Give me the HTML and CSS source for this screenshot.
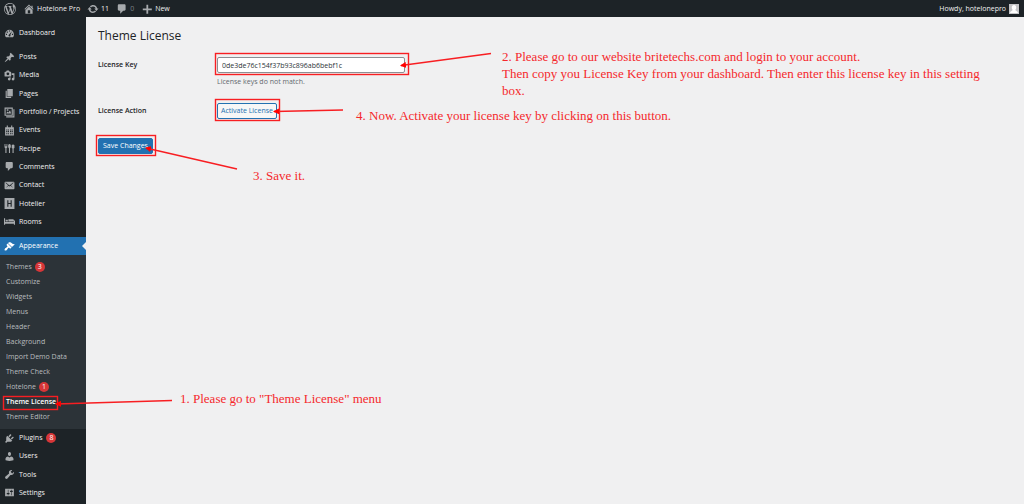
FILE: index.html
```
<!DOCTYPE html>
<html lang="en">
<head>
  <meta charset="UTF-8">
  <title>Theme License</title>
  <link rel="stylesheet" href="styles.css">
</head>
<body>
  <header class="adminbar">
    <a href="#" class="wp-logo" aria-label="WordPress"><svg viewBox="0 0 20 20"><path d="M20 10c0-5.51-4.49-10-10-10C4.48 0 0 4.49 0 10c0 5.52 4.48 10 10 10 5.51 0 10-4.48 10-10zM7.78 15.37L4.37 6.22c.55-.02 1.17-.08 1.17-.08.5-.06.44-1.13-.06-1.11 0 0-1.45.11-2.37.11-.18 0-.37 0-.58-.01C4.12 2.69 6.87 1.11 10 1.11c2.33 0 4.45.87 6.05 2.34-.68-.11-1.65.39-1.65 1.58 0 .74.45 1.36.9 2.1.35.61.55 1.36.55 2.46 0 1.49-1.4 5-1.4 5l-3.03-8.37c.54-.02.82-.17.82-.17.5-.05.44-1.25-.06-1.22 0 0-1.44.12-2.38.12-.87 0-2.33-.12-2.33-.12-.5-.03-.56 1.2-.06 1.22l.92.08 1.26 3.41zM17.41 10c.24-.64.74-1.87.43-4.25.7 1.29 1.05 2.71 1.05 4.25 0 3.29-1.73 6.24-4.4 7.78.97-2.59 1.94-5.2 2.92-7.78zM6.1 18.09C3.12 16.65 1.11 13.53 1.11 10c0-1.3.23-2.48.72-3.59C3.25 10.3 4.67 14.2 6.1 18.09zm4.03-6.63l2.58 6.98c-.86.29-1.76.45-2.71.45-.79 0-1.57-.11-2.29-.33.81-2.38 1.62-4.74 2.42-7.1z"/></svg></a>
    <a href="#"><svg viewBox="0 0 20 20"><path d="M16 8.500l1.530 1.530-1.060 1.060L10 4.600l-6.470 6.490-1.060-1.060L10 2.500l4 4v-2h2v4zm-6-2.460l6 5.990V18H4v-5.970zM12 17v-5H8v5h4z"/></svg>Hotelone Pro</a>
    <a href="#"><svg viewBox="0 0 20 20"><path d="M10.200 3.280c3.530 0 6.430 2.610 6.920 6h2.080l-3.500 4-3.500-4h2.320c-.450-1.970-2.210-3.450-4.320-3.450-1.450 0-2.730.710-3.540 1.780L4.950 5.660C6.230 4.200 8.110 3.280 10.200 3.280zm-.400 13.440c-3.520 0-6.430-2.610-6.920-6H.8l3.500-4 3.500 4H5.480c.450 1.970 2.210 3.450 4.320 3.450 1.450 0 2.730-.710 3.540-1.780l1.710 1.950c-1.280 1.460-3.150 2.380-5.250 2.380z"/></svg>11</a>
    <a href="#"><svg viewBox="0 0 20 20"><path d="M5 2h9c1.100 0 2 .9 2 2v7c0 1.100-.9 2-2 2h-2l-5 5v-5H5c-1.100 0-2-.9-2-2V4c0-1.100.9-2 2-2z"/></svg><span class="none">0</span></a>
    <a href="#"><svg viewBox="0 0 20 20"><path d="M18 9v3h-6v6H9v-6H3V9h6V3h3v6z"/></svg>New</a>
    <a href="#" class="account">Howdy, hotelonepro<span class="avatar"><svg viewBox="0 0 20 20"><path d="M10 2c3 0 4.500 2 4.500 5 0 2-1 4-2 5 1 2 5 2 5.500 6H2c.5-4 4.500-4 5.500-6-1-1-2-3-2-5 0-3 1.500-5 4.500-5z"/></svg></span></a>
  </header>

  <div class="wrap">
    <nav class="sidebar">
      <a href="#" class="item first"><svg viewBox="0 0 20 20"><path fill-rule="evenodd" d="M3.760 17h12.480c1.340-1.630 2.010-3.820 1.740-6.270C17.500 6.300 14.100 3 10 3s-7.500 3.300-7.980 7.730C1.750 13.180 2.420 15.370 3.760 17zM9 4.500h2v2H9zM5 6.500h2v2H5zM3.500 10.500h2v2h-2zM14.500 10.500h2v2h-2zM14.500 6l-3 6.500c.8 1.500-.2 3-1.500 3s-2.300-1.500-1.500-2.700z"/></svg>Dashboard</a>

      <div class="group main">
        <a href="#" class="item"><svg viewBox="0 0 20 20"><path d="M10.440 3.020l1.820-1.820 6.360 6.350-1.830 1.820c-1.050-.680-2.480-.570-3.410.360l-.750.750c-.920.930-1.040 2.350-.350 3.410l-1.830 1.820-2.410-2.410-2.800 2.790c-.420.420-3.380 2.710-3.800 2.290s1.860-3.390 2.280-3.810l2.790-2.790L4.100 9.360l1.830-1.820c1.050.690 2.480.570 3.400-.360l.750-.750c.930-.920 1.050-2.350.360-3.410z"/></svg>Posts</a>
        <a href="#" class="item"><svg viewBox="0 0 20 20"><path fill-rule="evenodd" d="M13 11V4c0-.55-.45-1-1-1h-1.670L9 1H5L3.670 3H2c-.55 0-1 .45-1 1v7c0 .55.45 1 1 1h10c.55 0 1-.45 1-1zM7 4.500a2.500 2.500 0 1 1 0 5 2.500 2.500 0 0 1 0-5zM14 6h5v10.500a2.500 2.500 0 1 1-2-2.450V9h-3zM10 14.050V13h2v3.500a2.500 2.500 0 1 1-2-2.450z"/></svg>Media</a>
        <a href="#" class="item"><svg viewBox="0 0 20 20"><path d="M6 15V2h10v13H6zm-1 1h8v2H3V5h2v11z"/></svg>Pages</a>
        <a href="#" class="item"><svg viewBox="0 0 20 20"><path fill-rule="evenodd" d="M1 1h15v15H1zM3 3v11h11V3zM4 12l2-4 2 2 3-4 2 6zM5 4h3v3H5zM17 4h2v15H4v-2h13z"/></svg>Portfolio / Projects</a>
        <a href="#" class="item"><svg viewBox="0 0 20 20"><path fill-rule="evenodd" d="M2 4h3V1h2v3h6V1h2v3h3v15H2zM4 8v2h2V8zM7 8v2h2V8zM11 8v2h2V8zM14 8v2h2V8zM4 11v2h2v-2zM7 11v2h2v-2zM11 11v2h2v-2zM14 11v2h2v-2zM4 15v2h2v-2zM7 15v2h2v-2zM11 15v2h2v-2zM14 15v2h2v-2z"/></svg>Events</a>
        <a href="#" class="item"><svg viewBox="0 0 20 20"><path d="M1 2h1v4h1V2h1v4h1V2h1v6L4.500 9.500V18h-2V9.500L1 8zM10 2c2 0 2.500 2 2.500 4 0 1.500-.5 3-1.500 3.500V18H9V9.500C8 9 7.500 7.500 7.500 6c0-2 .5-4 2.500-4zM14 4c1-2 4-2 5 0v5l-1.500 1v8h-2v-8L14 9z"/></svg>Recipe</a>
        <a href="#" class="item"><svg viewBox="0 0 20 20"><path d="M5 2h9c1.100 0 2 .9 2 2v7c0 1.100-.9 2-2 2h-2l-5 5v-5H5c-1.100 0-2-.9-2-2V4c0-1.100.9-2 2-2z"/></svg>Comments</a>
        <a href="#" class="item"><svg viewBox="0 0 20 20"><path fill-rule="evenodd" d="M3 3h14c1 0 2 .8 2 2v10c0 1-.9 2-2 2H3c-1 0-2-.9-2-2V5c0-1.200 1-2 2-2zM2.500 5l5 4.500-4.500 5 5.200-4.200L10 12l1.800-1.700L17 14.500l-4.500-5 5-4.500-1-.5L10 9.800 3.500 4.500z"/></svg>Contact</a>
        <a href="#" class="item"><svg viewBox="0 0 20 20"><path fill-rule="evenodd" d="M1 0h18v20H1zM6 4v12h2v-5h4v5h2V4h-2v5H8V4z"/></svg>Hotelier</a>
        <a href="#" class="item"><svg viewBox="0 0 20 20"><path d="M0 4h2v7h16V8h2v8h-2v-2H2v2H0zM3 7h4v3H3zM8 6h8c1 0 2 1 2 2v2H8z"/></svg>Rooms</a>
      </div>

      <a href="#" class="item current"><svg viewBox="0 0 20 20"><path d="M14.480 11.060L7.410 3.990l1.500-1.500c.5-.56 2.300-.47 3.510.32 1.210.8 1.430 1.280 2.910 2.100 1.180.64 2.450 1.260 4.450.85zm-.71.71L6.700 4.700 4.930 6.470c-.39.39-.39 1.020 0 1.410l1.060 1.060c.39.39.39 1.030 0 1.420-.6.6-1.430 1.110-2.210 1.690-.35.26-.7.53-1.010.84C1.430 14.230.4 16.080 1.400 17.070c.99 1 2.840-.03 4.180-1.360.31-.31.58-.66.85-1.020.57-.78 1.080-1.610 1.690-2.210.39-.39 1.020-.39 1.410 0l1.060 1.060c.39.39 1.020.39 1.410 0z"/></svg>Appearance</a>
      <div class="submenu">
        <a href="#">Themes<span class="count">3</span></a>
        <a href="#">Customize</a>
        <a href="#">Widgets</a>
        <a href="#">Menus</a>
        <a href="#">Header</a>
        <a href="#">Background</a>
        <a href="#">Import Demo Data</a>
        <a href="#">Theme Check</a>
        <a href="#">Hotelone<span class="count">1</span></a>
        <a href="#" class="active">Theme License</a>
        <a href="#">Theme Editor</a>
      </div>

      <div class="group bottom">
        <a href="#" class="item"><svg viewBox="0 0 20 20"><path d="M13.110 4.360L9.870 7.600 8 5.730l3.240-3.240c.35-.34 1.050-.2 1.560.32.52.51.66 1.210.31 1.550zm-8 1.770l.91-1.120 9.010 9.010-1.190.84c-.71.71-2.630 1.160-3.820 1.160H6.140L4.900 17.260c-.59.59-1.540.59-2.120 0-.59-.58-.59-1.530 0-2.120l1.240-1.240v-3.880c0-1.130.4-3.190 1.090-3.890zm7.260 3.970l3.240-3.240c.34-.35 1.040-.21 1.550.31.52.51.66 1.210.31 1.550l-3.240 3.250z"/></svg>Plugins<span class="count">8</span></a>
        <a href="#" class="item"><svg viewBox="0 0 20 20"><path d="M10 9.250c-2.270 0-2.730-3.440-2.730-3.440C7 4.020 7.820 2 9.970 2c2.160 0 2.980 2.020 2.710 3.810 0 0-.41 3.440-2.680 3.440zm0 2.570L12.720 10c2.390 0 4.520 2.330 4.520 4.530v2.490s-3.650 1.130-7.240 1.130c-3.650 0-7.240-1.130-7.240-1.130v-2.490c0-2.250 1.940-4.480 4.470-4.480z"/></svg>Users</a>
        <a href="#" class="item"><svg viewBox="0 0 20 20"><path d="M16.680 9.770c-1.340 1.340-3.300 1.670-4.950.99l-5.410 6.520c-.99.99-2.590.99-3.580 0s-.99-2.590 0-3.570l6.520-5.420c-.68-1.650-.35-3.610.99-4.950 1.280-1.280 3.120-1.620 4.720-1.060l-2.890 2.890 2.820 2.820 2.860-2.870c.53 1.580.18 3.390-1.080 4.650z"/></svg>Tools</a>
        <a href="#" class="item"><svg viewBox="0 0 20 20"><path fill-rule="evenodd" d="M2 3h16v14H2zM7 5v6H5v2h2v2h1v-2h2v-2H8V5zM13 5v2h-2v2h2v6h1V9h2V7h-2V5z"/></svg>Settings</a>
      </div>
    </nav>

    <main class="content">
      <h1>Theme License</h1>
      <form>
        <div class="row">
          <label for="license">License Key</label>
          <div>
            <input type="text" id="license" value="0de3de76c154f37b93c896ab6bebf1c">
            <p class="description">License keys do not match.</p>
          </div>
        </div>
        <div class="row">
          <label for="activate">License Action</label>
          <button type="button" id="activate" class="button">Activate License</button>
        </div>
        <button type="button" class="button primary">Save Changes</button>
      </form>
    </main>
  </div>

  <!-- numbered help notes on top of the page -->
  <div class="notes">
    <svg class="arrows" width="520" height="420">
      <defs>
        <marker id="head" viewBox="0 0 6 6" refX="5" refY="3" markerWidth="6" markerHeight="6" markerUnits="userSpaceOnUse" orient="auto">
          <path d="M0 0l6 3-6 3z"/>
        </marker>
      </defs>
      <g class="box">
        <rect x="215.500" y="53.500" width="193" height="21"/>
        <rect x="215.500" y="99.500" width="64" height="21"/>
        <rect x="96.500" y="135.500" width="59" height="20"/>
        <rect x="3.500" y="396.500" width="54" height="13"/>
      </g>
      <g class="line">
        <path d="M491 53.500L401 65.500"/>
        <path d="M343 110L274 111.500"/>
        <path d="M237 169L146 148"/>
        <path d="M172 400.500L56 404"/>
      </g>
    </svg>
    <p class="note note-menu">1. Please go to "Theme License" menu</p>
    <p class="note note-key">2. Please go to our website britetechs.com and login to your account.<br>Then copy you License Key from your dashboard. Then enter this license key in this setting box.</p>
    <p class="note note-save">3. Save it.</p>
    <p class="note note-activate">4. Now. Activate your license key by clicking on this button.</p>
  </div>
</body>
</html>
```
FILE: styles.css
```
* {
  box-sizing: border-box;
}
body {
  margin: 0;
  min-height: 100vh;
  display: flex;
  flex-direction: column;
  background-color: #f0f0f1;
  color: #3c434a;
  font-family: "Open Sans", "Noto Sans", sans-serif;
  font-size: 7px;
  line-height: 10px;
}
a {
  color: #f0f0f1;
  text-decoration: none;
}
svg {
  flex: none;
  fill: #a7aaad;
}

/* top bar */
.adminbar {
  display: flex;
  align-items: center;
  gap: 7px;
  height: 17px;
  padding: 0 5px 0 4px;
  background-color: #1d2327;
  font-weight: 500;
}
.adminbar a {
  display: flex;
  align-items: center;
  gap: 2px;
}
.adminbar svg {
  width: 12px;
  height: 12px;
}
.none {
  color: #7b8084;
}
.adminbar .account {
  margin-left: auto;
  gap: 3px;
}
.avatar {
  display: flex;
  background-color: #c3c4c7;
}
.adminbar .avatar svg {
  width: 10px;
  height: 10px;
  fill: white;
}

/* left menu */
.wrap {
  display: flex;
  flex: 1;
}
.sidebar {
  flex: none;
  width: 86px;
  background-color: #1d2327;
}
.item {
  display: flex;
  align-items: center;
  gap: 4px;
  padding-left: 4px;
  font-weight: 500;
  white-space: nowrap;
}
.item svg {
  width: 11px;
  height: 11px;
}
.first {
  height: 18px;
  margin: 7px 0 6px;
}
.group {
  display: grid;
  grid-auto-rows: 1fr;
}
.main {
  height: 183px;
  margin-bottom: 6px;
}
.bottom {
  height: 73px;
}
.current {
  position: relative;
  height: 18px;
  background-color: #2271b1;
  color: white;
}
.current svg {
  fill: white;
}
.current::after {
  content: "";
  position: absolute;
  right: 0;
  top: 5px;
  border: 4px solid transparent;
  border-left: 0;
  border-right-color: #f0f0f1;
}
.submenu {
  padding: 4px 0 5px;
  background-color: #2c3338;
}
.submenu a {
  display: flex;
  align-items: center;
  gap: 3px;
  height: 15px;
  padding-left: 6px;
  color: #b9bcbf;
}
.submenu .active {
  color: white;
  font-weight: 600;
}
.count {
  width: 10px;
  height: 10px;
  border-radius: 5px;
  background-color: #d63638;
  color: white;
  text-align: center;
}

/* settings page */
.content {
  flex: 1;
  padding: 11px 12px;
}
h1 {
  margin: 0 0 13px;
  font-size: 12px;
  font-weight: 400;
  line-height: 16px;
  color: #1d2327;
}
.row {
  display: flex;
  align-items: flex-start;
  margin-bottom: 16px;
}
.row label {
  width: 119px;
  padding-top: 3px;
  font-weight: 600;
  color: #1d2327;
}
#license {
  display: block;
  width: 188px;
  height: 16px;
  padding: 0 4px;
  border: 1px solid #8c8f94;
  border-radius: 2px;
  background-color: white;
  color: #2c3338;
  font: inherit;
}
.description {
  margin: 4px 0 0;
  color: #646970;
}
.button {
  height: 16px;
  padding: 0 3px;
  border: 1px solid #2271b1;
  border-radius: 2px;
  background-color: #f6f7f7;
  color: #2271b1;
  font: inherit;
  cursor: pointer;
}
.primary {
  display: block;
  margin-top: 19px;
  padding: 0 4px;
  background-color: #2271b1;
  color: white;
}

/* help notes */
.arrows {
  position: absolute;
  top: 0;
  left: 0;
  pointer-events: none;
}
.box {
  fill: none;
  stroke: #f81e22;
  stroke-width: 1.4;
}
.line {
  stroke: #f81e22;
  stroke-width: 1.4;
}
.line path {
  marker-end: url(#head);
}
#head path {
  fill: red;
  stroke: none;
}
.note {
  position: absolute;
  margin: 0;
  color: #f5282c;
  font-family: "Liberation Serif", serif;
  font-size: 13px;
  line-height: 17px;
}
.note-menu {
  top: 390px;
  left: 180px;
}
.note-key {
  top: 48px;
  left: 502px;
  right: 40px;
}
.note-save {
  top: 167px;
  left: 253px;
}
.note-activate {
  top: 107px;
  left: 356px;
}
```
